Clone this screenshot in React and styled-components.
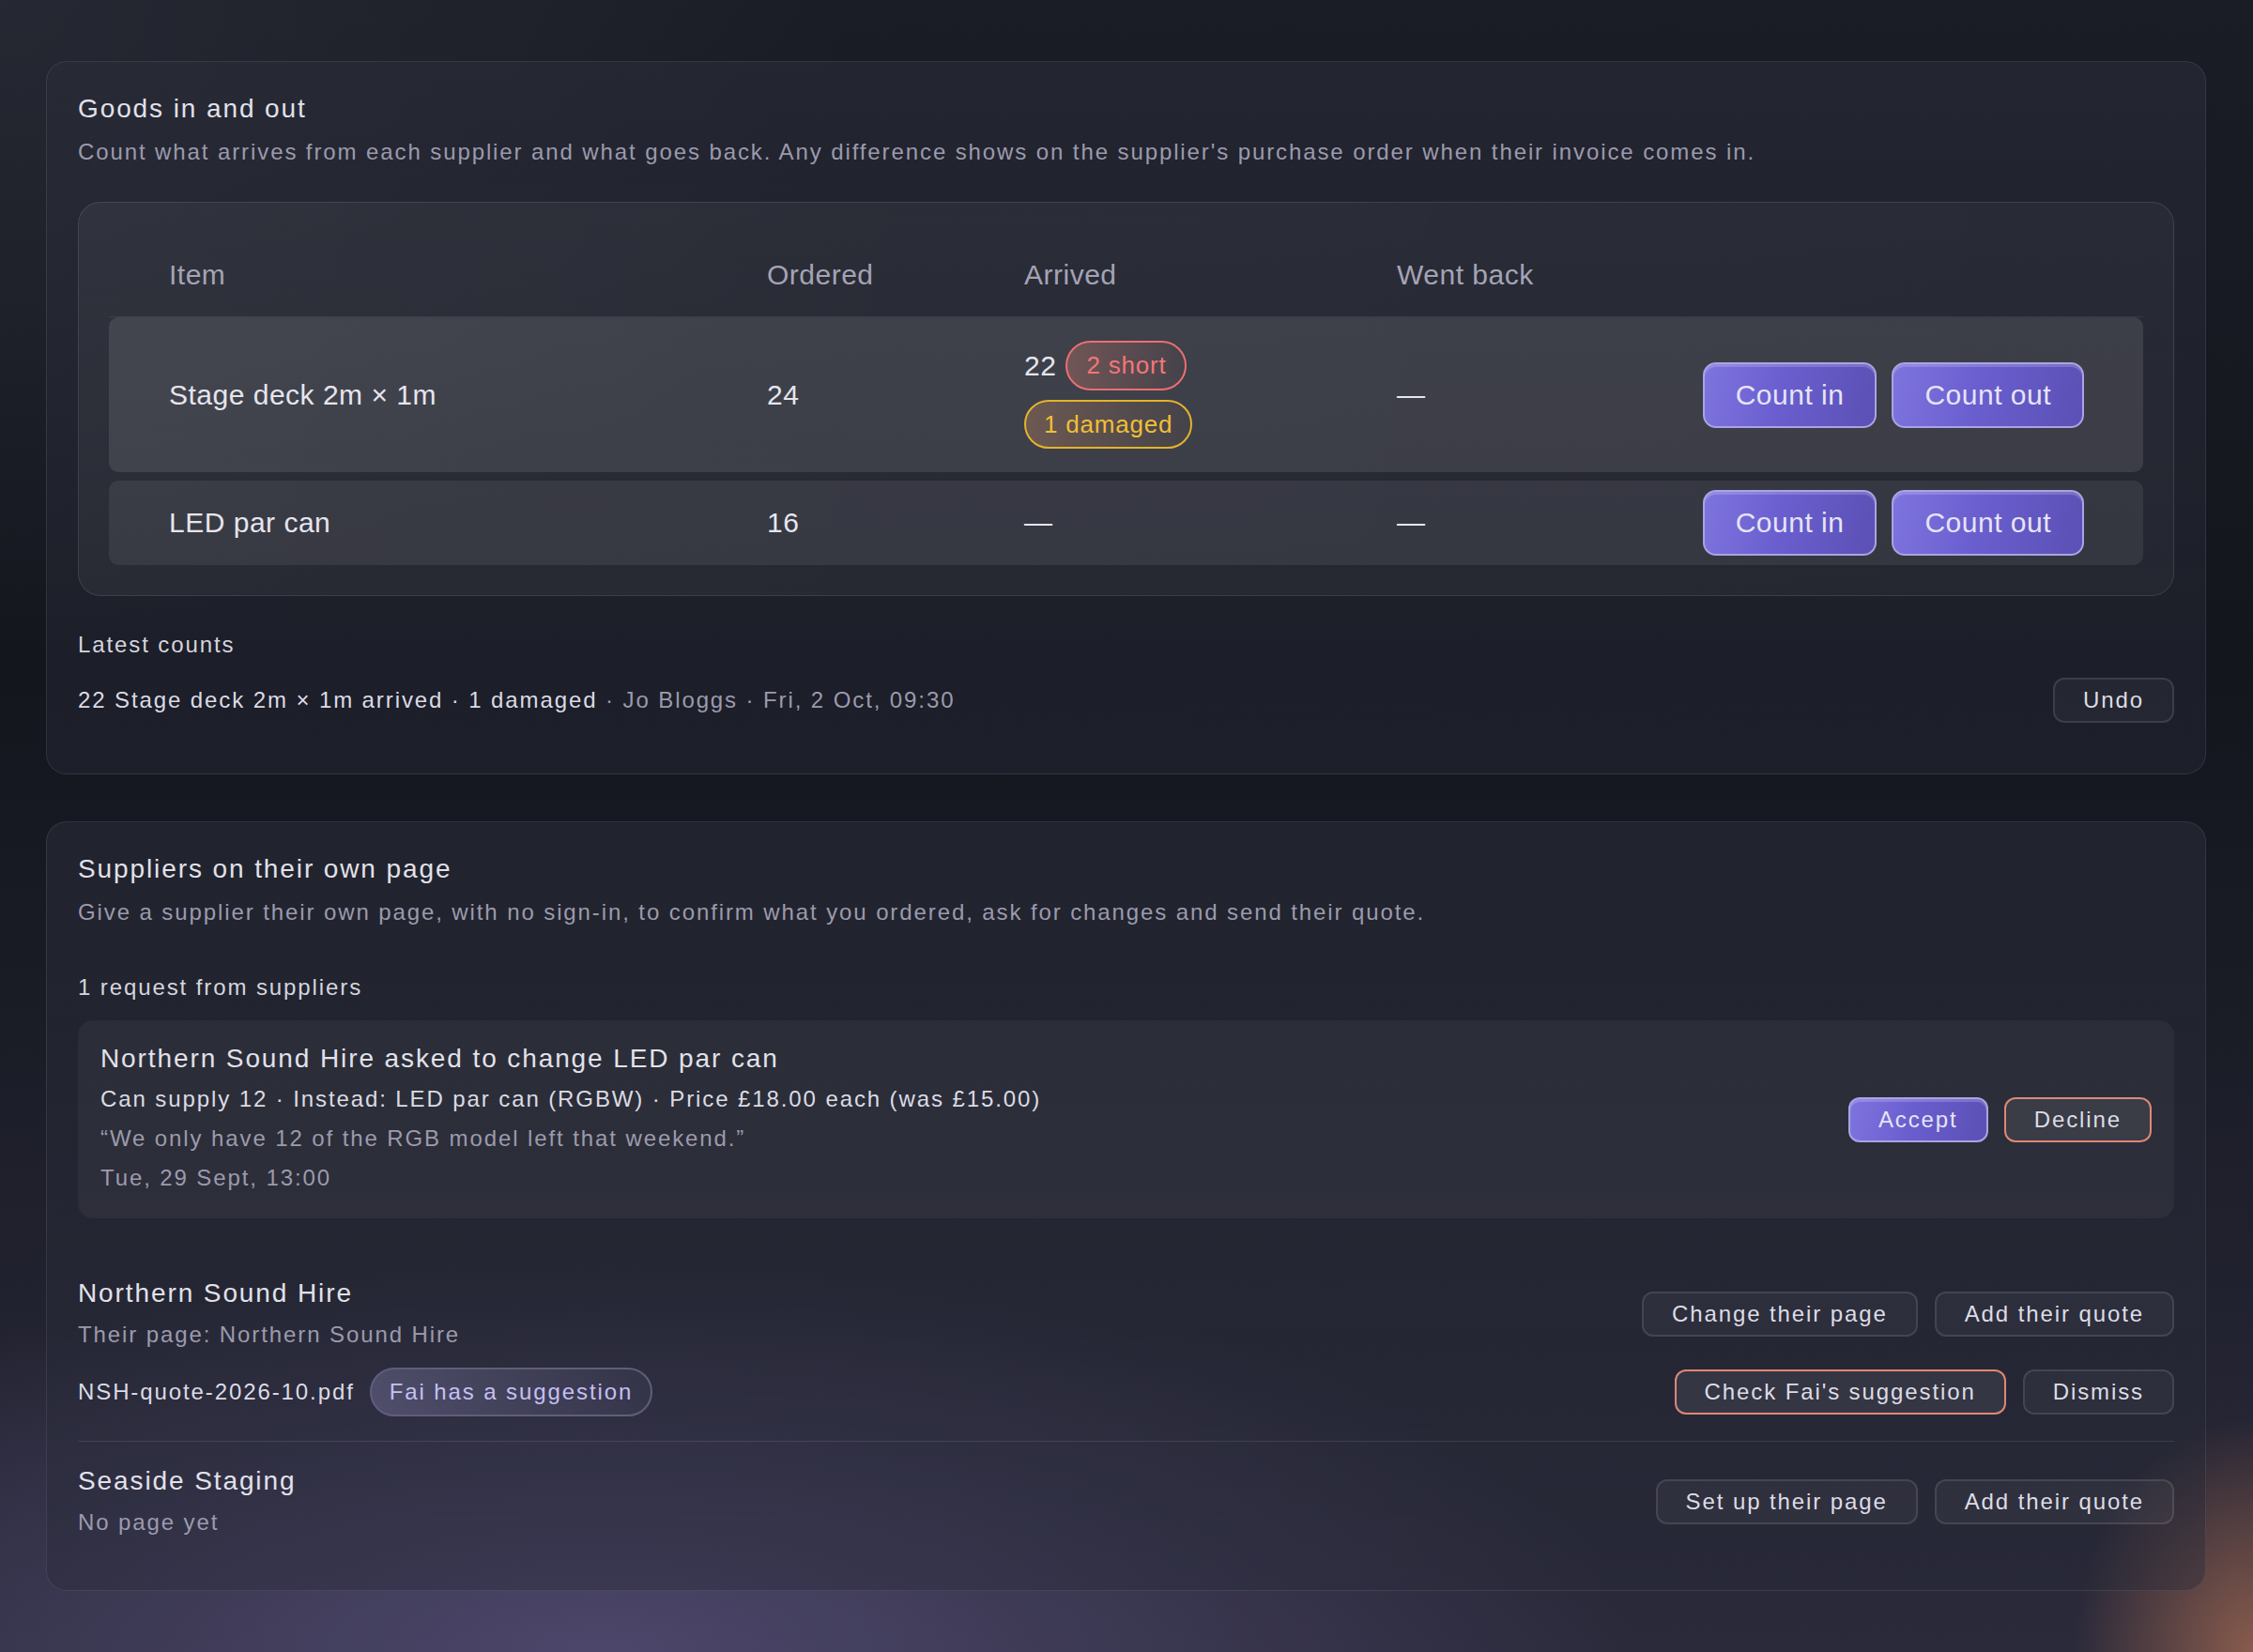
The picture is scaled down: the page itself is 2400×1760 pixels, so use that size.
import React from 'react';
import styled, { createGlobalStyle, css } from 'styled-components';

const GlobalStyle = createGlobalStyle`
  html, body {
    margin: 0;
  }
  body {
    min-height: 1760px;
    font-family: "Liberation Sans", Arial, sans-serif;
    letter-spacing: 1.9px;
    color: #dcdbe4;
    background:
      radial-gradient(ellipse 190px 250px at 2400px 1760px, rgba(176, 112, 84, 0.7), rgba(176, 112, 84, 0) 100%),
      radial-gradient(ellipse 1100px 420px at 640px 1760px, rgba(80, 74, 112, 0.9), rgba(80, 74, 112, 0) 100%),
      radial-gradient(ellipse 900px 700px at 0px 0px, rgba(44, 47, 58, 0.6), rgba(44, 47, 58, 0) 100%),
      linear-gradient(180deg, #1b1d26 0%, #14161e 40%, #1a1c26 62%, #2b2a3b 100%);
  }
`;

const Page = styled.main`
  padding: 65px 50px 65px 49px;
  display: flex;
  flex-direction: column;
  gap: 50px;
`;

const Card = styled.section`
  border: 1px solid rgba(255, 255, 255, 0.085);
  border-radius: 22px;
  background: linear-gradient(180deg, rgba(44, 47, 60, 0.5), rgba(40, 42, 56, 0.4));
  padding: 32px 33px;
`;

const Title = styled.h2`
  margin: 0;
  font-size: 28px;
  line-height: 36px;
  font-weight: 400;
  color: #e2e1ea;
`;

const Lead = styled.p`
  margin: 10px 0 0;
  font-size: 24px;
  line-height: 36px;
  color: #9c9aad;
`;

const TablePanel = styled.div`
  margin-top: 35px;
  padding: 32px;
  border: 1px solid rgba(255, 255, 255, 0.1);
  border-radius: 24px;
  letter-spacing: 0.5px;
  background: linear-gradient(100deg, rgba(255, 255, 255, 0.05), rgba(255, 255, 255, 0.035));
`;

const columns = '637px 274px 397px minmax(0, 1fr) auto';

const HeadRow = styled.div`
  display: grid;
  grid-template-columns: ${columns};
  align-items: center;
  height: 89px;
  padding: 0 63px 0 64px;
  border-bottom: 1px solid rgba(255, 255, 255, 0.08);
  font-size: 30px;
  color: #a5a3b5;
`;

const ItemRow = styled.div`
  display: grid;
  grid-template-columns: ${columns};
  align-items: center;
  padding: 10px 63px 10px 64px;
  border-radius: 10px;
  font-size: 30px;
  color: #e6e5ee;
  background: ${(p) => (p.$lit ? 'rgba(255, 255, 255, 0.1)' : 'rgba(255, 255, 255, 0.075)')};

  & + & {
    margin-top: 9px;
  }
`;

const Arrived = styled.div`
  display: flex;
  flex-direction: column;
  align-items: flex-start;
  gap: 10px;
  padding: ${(p) => (p.$stacked ? '15px 0' : '0')};
`;

const ArrivedLine = styled.div`
  display: flex;
  align-items: center;
  gap: 10px;
`;

const tones = {
  short: css`
    height: 53px;
    padding: 0 20px;
    font-size: 26px;
    letter-spacing: 0.8px;
    border-color: #ee6e70;
    color: #f47678;
    background: linear-gradient(90deg, rgba(176, 112, 100, 0.45), rgba(110, 80, 84, 0.15));
  `,
  damaged: css`
    height: 52px;
    padding: 0 19px;
    font-size: 26px;
    letter-spacing: 0.8px;
    border-color: #e4b42a;
    color: #f0bf36;
    background: linear-gradient(90deg, rgba(168, 120, 92, 0.45), rgba(110, 92, 76, 0.15));
  `,
  hint: css`
    height: 52px;
    padding: 0 19px;
    font-size: 24px;
    border-color: #5f5e7a;
    color: #c6c0f4;
    background: linear-gradient(90deg, rgba(130, 126, 170, 0.4), rgba(80, 80, 110, 0.2));
  `,
};

const Pill = styled.span`
  box-sizing: border-box;
  display: inline-flex;
  align-items: center;
  border: 2px solid;
  border-radius: 999px;
  ${(p) => tones[p.$tone]}
`;

const Actions = styled.div`
  display: flex;
  gap: ${(p) => p.$gap || 16}px;
  justify-self: end;
`;

const variants = {
  primary: css`
    border-color: #aaa3e4;
    color: #e6e4f6;
    background: linear-gradient(100deg, #7e74de 0%, #6a5ecf 45%, #5b50b4 100%);
    box-shadow: inset 0 3px 0 rgba(255, 255, 255, 0.18);
  `,
  ghost: css`
    border-color: rgba(255, 255, 255, 0.11);
    color: #dddce6;
    background: rgba(255, 255, 255, 0.04);
  `,
  warn: css`
    border-color: #de8778;
    color: #dddce6;
    background: rgba(255, 255, 255, 0.07);
  `,
};

const Button = styled.button`
  box-sizing: border-box;
  height: ${(p) => (p.$large ? 70 : 48)}px;
  padding: 0 ${(p) => (p.$large ? 33 : 30)}px;
  border: 2px solid;
  border-radius: ${(p) => (p.$large ? 14 : 12)}px;
  font-family: inherit;
  letter-spacing: inherit;
  font-size: ${(p) => (p.$large ? 30 : 24)}px;
  white-space: nowrap;
  cursor: pointer;
  ${(p) => variants[p.$variant || 'ghost']}
`;

const SmallHeading = styled.div`
  margin-top: ${(p) => p.$top}px;
  font-size: 24px;
  line-height: 36px;
  color: #d6d5de;
`;

const LatestRow = styled.div`
  margin: 17px 0 22px;
  display: flex;
  align-items: center;
  justify-content: space-between;
  font-size: 24px;
  color: #dcdbe4;
`;

const Muted = styled.span`
  color: #9c9aad;
`;

const RequestBox = styled.div`
  margin-top: 17px;
  padding: 23px 24px 22px;
  border-radius: 16px;
  background: rgba(255, 255, 255, 0.045);
  display: flex;
  align-items: center;
  justify-content: space-between;
`;

const RequestTitle = styled.div`
  font-size: 28px;
  line-height: 36px;
  color: #e2e1ea;
  margin-bottom: 4px;
`;

const RequestLine = styled.div`
  font-size: 24px;
  line-height: 42px;
  color: ${(p) => (p.$muted ? '#9c9aad' : '#dcdbe4')};
`;

const SupplierList = styled.div`
  margin-top: 38px;
`;

const Supplier = styled.div`
  padding: 24px 0 26px;

  & + & {
    border-top: 1px solid rgba(255, 255, 255, 0.1);
  }
  &:last-child {
    padding-bottom: 22px;
  }
`;

const SupplierTop = styled.div`
  display: flex;
  align-items: center;
  justify-content: space-between;
`;

const SupplierName = styled.div`
  font-size: 28px;
  line-height: 36px;
  color: #e2e1ea;
`;

const PageNote = styled.div`
  margin-top: 8px;
  font-size: 24px;
  line-height: 36px;
  color: #9c9aad;
`;

const FileRow = styled.div`
  margin-top: 17px;
  display: flex;
  align-items: center;
  justify-content: space-between;
`;

const FileInfo = styled.div`
  display: flex;
  align-items: center;
  gap: 16px;
  font-size: 24px;
  color: #dcdbe4;
`;

const items = [
  { name: 'Stage deck 2m × 1m', ordered: 24, arrived: 22, short: 2, damaged: 1, back: null },
  { name: 'LED par can', ordered: 16, arrived: null, back: null },
];

export default function App() {
  return (
    <>
      <GlobalStyle />
      <Page>
        <Card>
          <Title>Goods in and out</Title>
          <Lead>
            Count what arrives from each supplier and what goes back. Any difference shows on the supplier's purchase
            order when their invoice comes in.
          </Lead>

          <TablePanel>
            <HeadRow>
              <span>Item</span>
              <span>Ordered</span>
              <span>Arrived</span>
              <span>Went back</span>
            </HeadRow>
            {items.map((item, i) => (
              <ItemRow key={item.name} $lit={i === 0}>
                <span>{item.name}</span>
                <span>{item.ordered}</span>
                {item.arrived == null ? (
                  <span>—</span>
                ) : (
                  <Arrived $stacked>
                    <ArrivedLine>
                      <span>{item.arrived}</span>
                      <Pill $tone="short">{item.short} short</Pill>
                    </ArrivedLine>
                    <Pill $tone="damaged">{item.damaged} damaged</Pill>
                  </Arrived>
                )}
                <span>{item.back == null ? '—' : item.back}</span>
                <Actions>
                  <Button $large $variant="primary">Count in</Button>
                  <Button $large $variant="primary">Count out</Button>
                </Actions>
              </ItemRow>
            ))}
          </TablePanel>

          <SmallHeading $top={34}>Latest counts</SmallHeading>
          <LatestRow>
            <span>
              22 Stage deck 2m × 1m arrived · 1 damaged <Muted>· Jo Bloggs · Fri, 2 Oct, 09:30</Muted>
            </span>
            <Button>Undo</Button>
          </LatestRow>
        </Card>

        <Card>
          <Title>Suppliers on their own page</Title>
          <Lead>
            Give a supplier their own page, with no sign-in, to confirm what you ordered, ask for changes and send
            their quote.
          </Lead>

          <SmallHeading $top={44}>1 request from suppliers</SmallHeading>
          <RequestBox>
            <div>
              <RequestTitle>Northern Sound Hire asked to change LED par can</RequestTitle>
              <RequestLine>Can supply 12 · Instead: LED par can (RGBW) · Price £18.00 each (was £15.00)</RequestLine>
              <RequestLine $muted>“We only have 12 of the RGB model left that weekend.”</RequestLine>
              <RequestLine $muted>Tue, 29 Sept, 13:00</RequestLine>
            </div>
            <Actions $gap={17}>
              <Button $variant="primary">Accept</Button>
              <Button $variant="warn">Decline</Button>
            </Actions>
          </RequestBox>

          <SupplierList>
            <Supplier>
              <SupplierTop>
                <div>
                  <SupplierName>Northern Sound Hire</SupplierName>
                  <PageNote>Their page: Northern Sound Hire</PageNote>
                </div>
                <Actions $gap={18}>
                  <Button>Change their page</Button>
                  <Button>Add their quote</Button>
                </Actions>
              </SupplierTop>
              <FileRow>
                <FileInfo>
                  <span>NSH-quote-2026-10.pdf</span>
                  <Pill $tone="hint">Fai has a suggestion</Pill>
                </FileInfo>
                <Actions $gap={18}>
                  <Button $variant="warn">Check Fai's suggestion</Button>
                  <Button>Dismiss</Button>
                </Actions>
              </FileRow>
            </Supplier>
            <Supplier>
              <SupplierTop>
                <div>
                  <SupplierName>Seaside Staging</SupplierName>
                  <PageNote>No page yet</PageNote>
                </div>
                <Actions $gap={18}>
                  <Button>Set up their page</Button>
                  <Button>Add their quote</Button>
                </Actions>
              </SupplierTop>
            </Supplier>
          </SupplierList>
        </Card>
      </Page>
    </>
  );
}
